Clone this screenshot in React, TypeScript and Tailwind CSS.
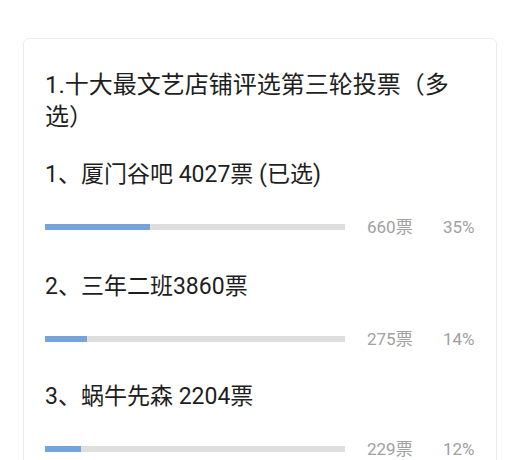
const options = [
  { label: '1、厦门谷吧 4027票 (已选)', votes: '660票', pct: 35, mt: 'mt-[27px]' },
  { label: '2、三年二班3860票', votes: '275票', pct: 14, mt: 'mt-[35px]' },
  { label: '3、蜗牛先森 2204票', votes: '229票', pct: 12, mt: 'mt-[33px]' },
];

export default function App() {
  return (
    <div
      className="w-[520px] h-[460px] overflow-hidden bg-white pt-[38px] pl-[23px]"
      style={{ fontFamily: 'Roboto, "Noto Sans CJK SC", sans-serif' }}
    >
      <div className="w-[474px] rounded-md border border-[#ececec] pt-[30px] pb-8 pl-[21px] pr-[20px]">
        <h1 className="text-[24px] leading-[32px] text-[#1e1e1e]">
          1.十大最文艺店铺评选第三轮投票（多选）
        </h1>

        {options.map((o) => (
          <div key={o.label} className={o.mt}>
            <p className="text-[23px] leading-[30px] text-[#1e1e1e]">{o.label}</p>
            <div className="mt-[27px] flex items-center">
              <div className="w-[300px] h-[6px] bg-[#dedede]">
                <div className="h-full bg-[#76a3d9]" style={{ width: `${o.pct}%` }} />
              </div>
              <span className="ml-[22px] w-[76px] text-[17px] leading-[20px] text-[#a0a0a0]">{o.votes}</span>
              <span className="text-[17px] leading-[20px] text-[#a0a0a0]">{o.pct}%</span>
            </div>
          </div>
        ))}
      </div>
    </div>
  );
}
